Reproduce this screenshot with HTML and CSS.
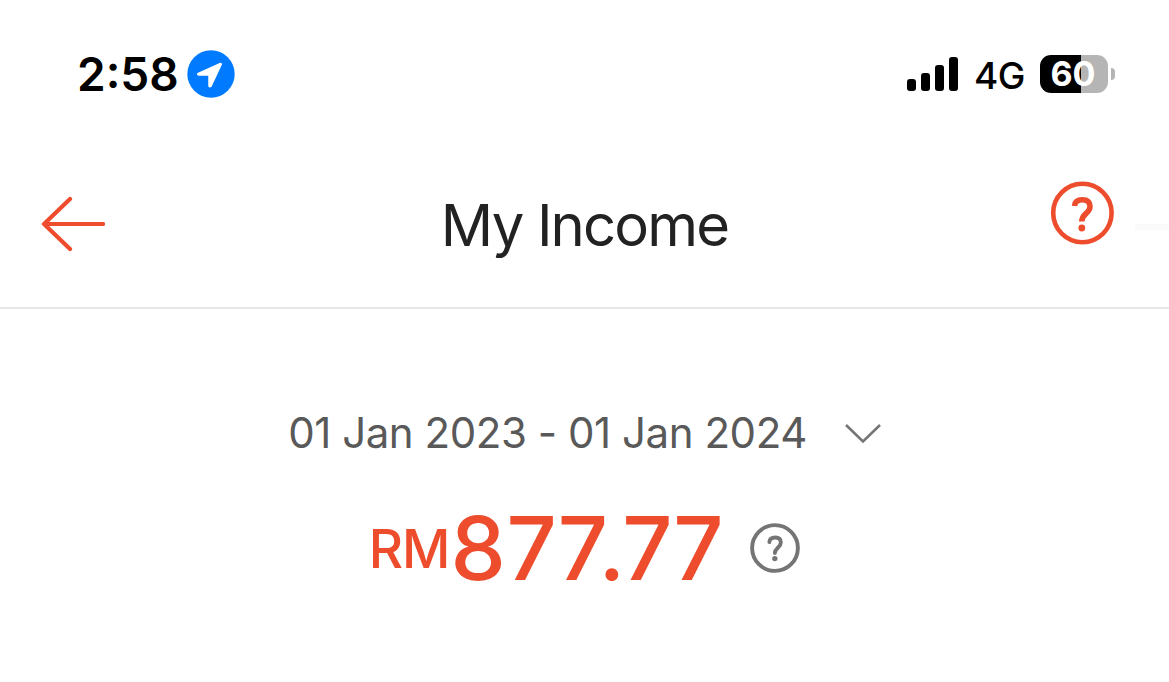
FILE: index.html
```html
<!DOCTYPE html>
<html lang="en">
<head>
<meta charset="utf-8">
<title>My Income</title>
<link rel="stylesheet" href="styles.css">
</head>
<body>
<div class="status">
  <div class="status-left">
    <span class="time">2<span class="colon">:</span>58</span>
    <svg class="location" viewBox="0 0 48 48"><circle cx="24" cy="24" r="23.700" fill="#007aff"/><path d="M33.500 13.500L10.800 23.600Q10.600 24.800 11.500 25H22V36Q22.800 37.200 24 36.200L34.300 14.300Q34.300 13.500 33.500 13.500Z" fill="#fff" stroke="#fff" stroke-width="1.500" stroke-linejoin="round"/></svg>
  </div>
  <div class="status-right">
    <svg class="signal" viewBox="0 0 52 34"><rect x="0" y="22" width="9" height="12" rx="3"/><rect x="14" y="16" width="9" height="18" rx="3"/><rect x="28" y="8" width="9" height="26" rx="3"/><rect x="42" y="0" width="9" height="34" rx="3"/></svg>
    <span class="network">4G</span>
    <div class="battery"><span class="level">60</span></div>
    <span class="battery-tip"></span>
  </div>
</div>
<header class="header">
  <svg class="back" viewBox="0 0 64 56"><path d="M29 3L3 28L29 53M3 28H62" fill="none" stroke="#ee4d2d" stroke-width="4.200" stroke-linecap="round" stroke-linejoin="round"/></svg>
  <h1 class="title">My Income</h1>
  <svg class="help" viewBox="0 0 64 64"><circle cx="32.400" cy="32" r="29.200" fill="none" stroke="#ee4d2d" stroke-width="4.600"/><path d="M24.500 25Q25 18.700 32.300 18.700Q40 18.700 40 25.500C40 32.500 31.800 32.500 31.800 40.500" fill="none" stroke="#ee4d2d" stroke-width="5.600"/><circle cx="31.800" cy="47" r="3.400" fill="#ee4d2d"/></svg>
  <span class="edge-shade"></span>
</header>
<main class="summary">
  <div class="range"><span class="dates">01 Jan 2023 - 01 Jan 2024</span><svg class="chevron" viewBox="0 0 36 22"><path d="M1 2L18 18.500L35 2" fill="none" stroke="#757575" stroke-width="2.600"/></svg></div>
  <div class="amount"><span class="currency">RM</span><span class="value">87<span class="before-point">7</span><span class="point">.</span>77</span><svg class="info" viewBox="0 0 64 64"><circle cx="32" cy="32" r="29.300" fill="none" stroke="#757575" stroke-width="5"/><path d="M24.800 24.500Q25 18.500 32.300 18.500Q39.500 18.500 39.500 25C39.500 31.500 31.800 32 31.800 38.500" fill="none" stroke="#757575" stroke-width="5" stroke-linecap="round"/><circle cx="31.800" cy="45.500" r="3.400" fill="#757575"/></svg></div>
</main>
</body>
</html>
```
FILE: styles.css
```css
* { box-sizing: border-box; }
body { margin: 0; background: #fff; font-family: Inter, sans-serif; height: 682px; overflow: hidden; }
svg { display: block; flex: none; }
.status { height: 148px; padding: 0 54px 0 77px; display: flex; justify-content: space-between; align-items: center; }
.status-left, .status-right { display: flex; align-items: center; }
.time { font-size: 46px; font-weight: 600; width: 110px; line-height: 56px; }
.colon { vertical-align: 3px; line-height: 1; }
.location { width: 48px; height: 48px; }
.signal { width: 52px; height: 34px; margin-right: 15px; }
.network { font-size: 37px; font-weight: 450; width: 66px; padding-top: 3px; letter-spacing: -0.5px; }
.battery { width: 68px; height: 38px; border-radius: 11px; background: linear-gradient(90deg, #000 60%, #b5b5b5 60%); color: #fff; text-align: center; }
.level { display: block; margin-left: -2px; font-size: 34px; font-weight: 700; line-height: 38px; }
.battery-tip { width: 4px; height: 12px; margin-left: 3px; border-radius: 0 4px 4px 0; background: #b5b5b5; }
.header { position: relative; height: 161px; border-bottom: 2px solid #e8e8e8; padding: 0 55px 8px 41px; display: grid; grid-template-columns: 1fr auto 1fr; align-items: center; }
.back { width: 64px; height: 56px; }
.title { margin: 0; padding: 2px 0 0 14px; font-size: 58px; font-weight: 400; letter-spacing: -1.85px; color: #222; white-space: nowrap; }
.help { width: 64px; height: 64px; justify-self: end; margin-bottom: 22px; }
.edge-shade { position: absolute; right: 0; top: 76px; width: 34px; height: 6px; background: #fafafa; }
.summary { padding-top: 93px; }
.range { height: 60px; display: flex; justify-content: center; align-items: center; gap: 38px; }
.dates { font-size: 42px; letter-spacing: -0.45px; color: #595959; white-space: nowrap; }
.chevron { width: 36px; height: 22px; margin-top: 3px; }
.amount { height: 110px; margin-top: 31px; display: flex; justify-content: center; align-items: center; line-height: 110px; color: #ee4d2d; }
.currency { font-size: 53px; letter-spacing: -1px; margin-right: 1px; font-weight: 450; padding-top: 2px; }
.value { font-size: 88px; font-weight: 500; font-kerning: none; letter-spacing: 0.8px; margin-top: -1px; }
.before-point { letter-spacing: -9.5px; }
.point { letter-spacing: -3px; }
.info { width: 50px; height: 50px; margin-left: 26px; }
```
